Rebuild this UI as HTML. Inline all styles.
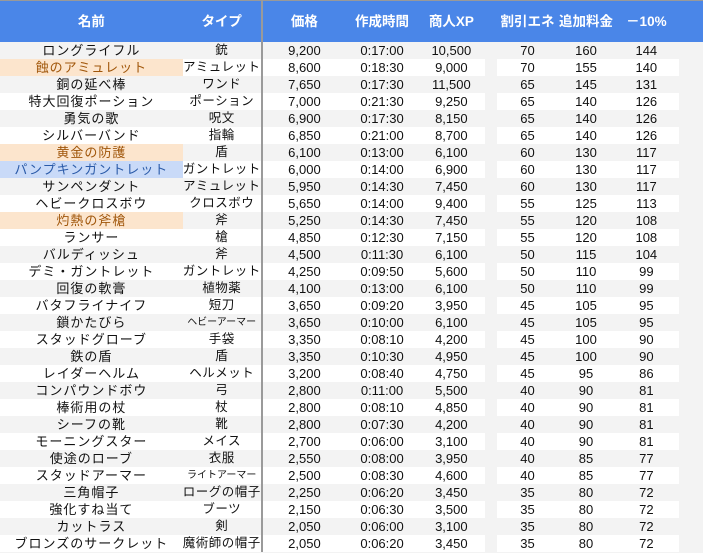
<!DOCTYPE html>
<html><head><meta charset="utf-8"><style>
body{margin:0;width:703px;height:553px;overflow:hidden;background:#f3f3f3;font-family:"Liberation Sans","Noto Sans CJK JP",sans-serif;}
table{border-collapse:collapse;table-layout:fixed;position:absolute;left:0;top:0;}
td,th{padding:0;height:17px;line-height:17px;font-size:13px;text-align:center;white-space:nowrap;overflow:hidden;color:#111;}
th{height:41px;background:#4a86e8;color:#fff;font-weight:bold;font-size:13.5px;border-top:1px solid #999;}
td.n{letter-spacing:1px;}
tr:nth-child(even) td{background:#f3f3f3;}
tr:nth-child(odd) td{background:#fff;}
td.g,th.g{background:#f3f3f3 !important;}
th.g{background:#4a86e8 !important;}
.c1{border-right:2px solid #9a9a9a;}
td.c1{font-size:12.5px;letter-spacing:0.5px;}
td.o{background:#fce5cd !important;color:#a0560a;}
td.b{background:#c9daf8 !important;color:#2a5aa8;}
td.s{font-size:10px;letter-spacing:0;}
</style></head><body>
<table>
<colgroup><col style="width:183px"><col style="width:77px"><col style="width:85px"><col style="width:72px"><col style="width:67px"><col style="width:12px"><col style="width:62px"><col style="width:55px"><col style="width:66px"><col style="width:24px"></colgroup>
<tr><th>名前</th><th class="c1">タイプ</th><th>価格</th><th>作成時間</th><th>商人XP</th><th class="g"></th><th>割引エネ</th><th>追加料金</th><th>－10%</th><th class="g"></th></tr>
<tr><td class="n">ロングライフル</td><td class="c1">銃</td><td>9,200</td><td>0:17:00</td><td>10,500</td><td class="g"></td><td>70</td><td>160</td><td>144</td><td class="g"></td></tr>
<tr><td class="n o">蝕のアミュレット</td><td class="c1">アミュレット</td><td>8,600</td><td>0:18:30</td><td>9,000</td><td class="g"></td><td>70</td><td>155</td><td>140</td><td class="g"></td></tr>
<tr><td class="n">銅の延べ棒</td><td class="c1">ワンド</td><td>7,650</td><td>0:17:30</td><td>11,500</td><td class="g"></td><td>65</td><td>145</td><td>131</td><td class="g"></td></tr>
<tr><td class="n">特大回復ポーション</td><td class="c1">ポーション</td><td>7,000</td><td>0:21:30</td><td>9,250</td><td class="g"></td><td>65</td><td>140</td><td>126</td><td class="g"></td></tr>
<tr><td class="n">勇気の歌</td><td class="c1">呪文</td><td>6,900</td><td>0:17:30</td><td>8,150</td><td class="g"></td><td>65</td><td>140</td><td>126</td><td class="g"></td></tr>
<tr><td class="n">シルバーバンド</td><td class="c1">指輪</td><td>6,850</td><td>0:21:00</td><td>8,700</td><td class="g"></td><td>65</td><td>140</td><td>126</td><td class="g"></td></tr>
<tr><td class="n o">黄金の防護</td><td class="c1">盾</td><td>6,100</td><td>0:13:00</td><td>6,100</td><td class="g"></td><td>60</td><td>130</td><td>117</td><td class="g"></td></tr>
<tr><td class="n b">パンプキンガントレット</td><td class="c1">ガントレット</td><td>6,000</td><td>0:14:00</td><td>6,900</td><td class="g"></td><td>60</td><td>130</td><td>117</td><td class="g"></td></tr>
<tr><td class="n">サンペンダント</td><td class="c1">アミュレット</td><td>5,950</td><td>0:14:30</td><td>7,450</td><td class="g"></td><td>60</td><td>130</td><td>117</td><td class="g"></td></tr>
<tr><td class="n">ヘビークロスボウ</td><td class="c1">クロスボウ</td><td>5,650</td><td>0:14:00</td><td>9,400</td><td class="g"></td><td>55</td><td>125</td><td>113</td><td class="g"></td></tr>
<tr><td class="n o">灼熱の斧槍</td><td class="c1">斧</td><td>5,250</td><td>0:14:30</td><td>7,450</td><td class="g"></td><td>55</td><td>120</td><td>108</td><td class="g"></td></tr>
<tr><td class="n">ランサー</td><td class="c1">槍</td><td>4,850</td><td>0:12:30</td><td>7,150</td><td class="g"></td><td>55</td><td>120</td><td>108</td><td class="g"></td></tr>
<tr><td class="n">バルディッシュ</td><td class="c1">斧</td><td>4,500</td><td>0:11:30</td><td>6,100</td><td class="g"></td><td>50</td><td>115</td><td>104</td><td class="g"></td></tr>
<tr><td class="n">デミ・ガントレット</td><td class="c1">ガントレット</td><td>4,250</td><td>0:09:50</td><td>5,600</td><td class="g"></td><td>50</td><td>110</td><td>99</td><td class="g"></td></tr>
<tr><td class="n">回復の軟膏</td><td class="c1">植物薬</td><td>4,100</td><td>0:13:00</td><td>6,100</td><td class="g"></td><td>50</td><td>110</td><td>99</td><td class="g"></td></tr>
<tr><td class="n">バタフライナイフ</td><td class="c1">短刀</td><td>3,650</td><td>0:09:20</td><td>3,950</td><td class="g"></td><td>45</td><td>105</td><td>95</td><td class="g"></td></tr>
<tr><td class="n">鎖かたびら</td><td class="c1 s">ヘビーアーマー</td><td>3,650</td><td>0:10:00</td><td>6,100</td><td class="g"></td><td>45</td><td>105</td><td>95</td><td class="g"></td></tr>
<tr><td class="n">スタッドグローブ</td><td class="c1">手袋</td><td>3,350</td><td>0:08:10</td><td>4,200</td><td class="g"></td><td>45</td><td>100</td><td>90</td><td class="g"></td></tr>
<tr><td class="n">鉄の盾</td><td class="c1">盾</td><td>3,350</td><td>0:10:30</td><td>4,950</td><td class="g"></td><td>45</td><td>100</td><td>90</td><td class="g"></td></tr>
<tr><td class="n">レイダーヘルム</td><td class="c1">ヘルメット</td><td>3,200</td><td>0:08:40</td><td>4,750</td><td class="g"></td><td>45</td><td>95</td><td>86</td><td class="g"></td></tr>
<tr><td class="n">コンパウンドボウ</td><td class="c1">弓</td><td>2,800</td><td>0:11:00</td><td>5,500</td><td class="g"></td><td>40</td><td>90</td><td>81</td><td class="g"></td></tr>
<tr><td class="n">棒術用の杖</td><td class="c1">杖</td><td>2,800</td><td>0:08:10</td><td>4,850</td><td class="g"></td><td>40</td><td>90</td><td>81</td><td class="g"></td></tr>
<tr><td class="n">シーフの靴</td><td class="c1">靴</td><td>2,800</td><td>0:07:30</td><td>4,200</td><td class="g"></td><td>40</td><td>90</td><td>81</td><td class="g"></td></tr>
<tr><td class="n">モーニングスター</td><td class="c1">メイス</td><td>2,700</td><td>0:06:00</td><td>3,100</td><td class="g"></td><td>40</td><td>90</td><td>81</td><td class="g"></td></tr>
<tr><td class="n">使途のローブ</td><td class="c1">衣服</td><td>2,550</td><td>0:08:00</td><td>3,950</td><td class="g"></td><td>40</td><td>85</td><td>77</td><td class="g"></td></tr>
<tr><td class="n">スタッドアーマー</td><td class="c1 s">ライトアーマー</td><td>2,500</td><td>0:08:30</td><td>4,600</td><td class="g"></td><td>40</td><td>85</td><td>77</td><td class="g"></td></tr>
<tr><td class="n">三角帽子</td><td class="c1">ローグの帽子</td><td>2,250</td><td>0:06:20</td><td>3,450</td><td class="g"></td><td>35</td><td>80</td><td>72</td><td class="g"></td></tr>
<tr><td class="n">強化すね当て</td><td class="c1">ブーツ</td><td>2,150</td><td>0:06:30</td><td>3,500</td><td class="g"></td><td>35</td><td>80</td><td>72</td><td class="g"></td></tr>
<tr><td class="n">カットラス</td><td class="c1">剣</td><td>2,050</td><td>0:06:00</td><td>3,100</td><td class="g"></td><td>35</td><td>80</td><td>72</td><td class="g"></td></tr>
<tr><td class="n">ブロンズのサークレット</td><td class="c1">魔術師の帽子</td><td>2,050</td><td>0:06:20</td><td>3,450</td><td class="g"></td><td>35</td><td>80</td><td>72</td><td class="g"></td></tr>
</table>
</body></html>
